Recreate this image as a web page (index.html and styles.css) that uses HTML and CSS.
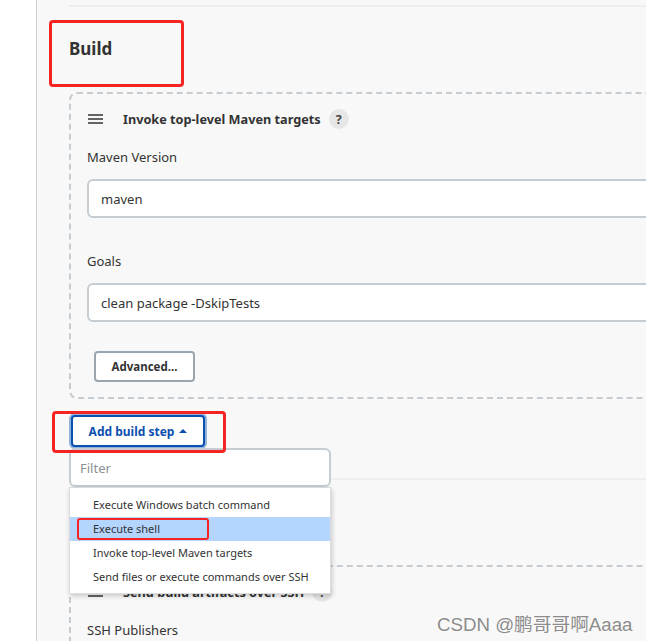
FILE: index.html
```html
<!DOCTYPE html>
<html>
<head>
  <meta charset="UTF-8">
  <title>Build</title>
  <link rel="stylesheet" href="styles.css">
</head>
<body>

  <div class="page">
    <div class="side"></div>

    <div class="main">
      <div class="section-sep"></div>
      <h2 class="section-title">Build</h2>

      <div class="step">
        <div class="step-head">
          <svg class="handle" width="15" height="10" viewBox="0 0 15 10">
            <path d="M0 1h15M0 5h15M0 9h15" stroke="#333" stroke-width="1.5" />
          </svg>
          <b class="step-name">Invoke top-level Maven targets</b>
          <span class="help">?</span>
        </div>

        <div class="field">
          <label for="mavenVersion">Maven Version</label>
          <input id="mavenVersion" type="text" value="maven" />
        </div>

        <div class="field">
          <label for="goals">Goals</label>
          <input id="goals" type="text" value="clean package -DskipTests" />
        </div>

        <button type="button" class="advanced-btn">Advanced...</button>
      </div>

      <div class="add-step">
        <button type="button" class="add-btn">Add build step <span class="caret"></span></button>

        <div class="popup">
          <input class="filter" type="text" placeholder="Filter" />
          <ul class="menu">
            <li>Execute Windows batch command</li>
            <li class="active">Execute shell</li>
            <li>Invoke top-level Maven targets</li>
            <li>Send files or execute commands over SSH</li>
          </ul>
        </div>
      </div>

      <div class="section-sep post-sep"></div>
      <!-- post-build header sits under the open menu -->
      <div class="section-title"></div>

      <div class="step">
        <div class="step-head">
          <svg class="handle" width="15" height="10" viewBox="0 0 15 10">
            <path d="M0 1h15M0 5h15M0 9h15" stroke="#333" stroke-width="1.5" />
          </svg>
          <b class="step-name">Send build artifacts over SSH</b>
          <span class="help">?</span>
        </div>
        <div class="field">
          <label>SSH Publishers</label>
        </div>
      </div>
    </div>
  </div>

  <!-- annotations drawn on top of the screenshot -->
  <div class="mark mark-build"></div>
  <div class="mark mark-add"></div>
  <div class="mark mark-shell"></div>

  <div class="watermark">CSDN @鹏哥哥啊Aaaa</div>

</body>
</html>
```

FILE: styles.css
```css
body {
  margin: 0;
  background-color: #fff;
  font-family: "Noto Sans", "Open Sans", Arial, sans-serif;
  color: #333;
  overflow: hidden;
  height: 641px;
}

.page {
  display: flex;
  min-height: 641px;
}

.side {
  width: 36px;
  flex: none;
  border-right: 1px solid #ccd1d5;
  background-color: #fff;
}

.main {
  flex: 1;
  background-color: #f8f8f8;
  padding: 5px 0 0 32px;
  min-width: 0;
}

.section-sep {
  height: 2px;
  background-color: #eeeeee;
}

.post-sep {
  margin-top: 31px;
  margin-left: 262px;
}

.section-title {
  margin: 32px 0 33px;
  height: 20px;
  font-size: 17px;
  line-height: 20px;
  font-weight: bold;
  color: #333;
}

.step {
  border: 2px dashed #c5ccd2;
  border-right: none;
  border-radius: 8px 0 0 8px;
  padding: 15px 0 15px 16px;
  margin-right: -40px;
}

.step-head {
  display: flex;
  align-items: center;
  height: 20px;
}

.handle {
  margin-left: 1px;
  margin-right: 20px;
}

.step-name {
  font-size: 12.7px;
  font-weight: bold;
  color: #333;
}

.help {
  width: 20px;
  height: 20px;
  border-radius: 50%;
  background-color: #e6e6e6;
  color: #444;
  font-size: 12.5px;
  font-weight: bold;
  display: flex;
  align-items: center;
  justify-content: center;
  margin-left: 8px;
}

.field label {
  display: block;
  font-size: 13px;
  line-height: 18px;
  margin: 19px 0 13px;
  color: #333;
}

.field + .field label {
  margin-top: 34px;
}

.field input {
  display: block;
  width: 100%;
  height: 39px;
  box-sizing: border-box;
  border: 2px solid #c5ccd2;
  border-radius: 6px;
  padding: 0 12px;
  font-family: inherit;
  font-size: 13px;
  color: #333;
  background-color: #fff;
}

.advanced-btn {
  margin: 29px 0 0 7px;
  width: 101px;
  height: 31px;
  border: 2px solid #9aa5ae;
  border-radius: 4px;
  background-color: #fff;
  font-family: inherit;
  font-size: 11.5px;
  font-weight: bold;
  color: #333;
}

.add-step {
  position: relative;
  margin-top: 16px;
  height: 32px;
}

.add-btn {
  margin-left: 2px;
  width: 134px;
  height: 32px;
  border: 2px solid #0b4fb0;
  border-radius: 4px;
  box-shadow: 0 0 0 2px #8fb3d9;
  background-color: #fff;
  font-family: inherit;
  font-size: 12px;
  font-weight: bold;
  color: #0b4fb0;
  display: flex;
  align-items: center;
  justify-content: center;
  gap: 5px;
}

.caret {
  width: 0;
  height: 0;
  border-left: 4px solid transparent;
  border-right: 4px solid transparent;
  border-bottom: 4px solid #0b4fb0;
}

.popup {
  position: absolute;
  left: 0;
  top: 33px;
  width: 262px;
  z-index: 5;
}

.filter {
  display: block;
  width: 100%;
  height: 39px;
  box-sizing: border-box;
  border: 2px solid #c5ccd2;
  border-radius: 6px;
  padding: 0 9px;
  font-family: inherit;
  font-size: 13px;
  background-color: #fff;
}

.filter::placeholder {
  color: #8a8f94;
}

.menu {
  list-style: none;
  margin: 0;
  padding: 5px 0 4px;
  background-color: #fff;
  border: 1px solid #dcdcdc;
  box-shadow: 1px 2px 5px rgba(0, 0, 0, 0.2);
}

.menu li {
  height: 24px;
  line-height: 24px;
  padding-left: 23px;
  font-size: 11px;
  color: #333;
}

.menu li.active {
  background-color: #b4d5fd;
}

.mark {
  position: absolute;
  border: 3px solid #f52424;
  border-radius: 4px;
  box-sizing: border-box;
  z-index: 10;
}

.mark-build {
  left: 49px;
  top: 20px;
  width: 135px;
  height: 67px;
}

.mark-add {
  left: 52px;
  top: 411px;
  width: 174px;
  height: 42px;
}

.mark-shell {
  left: 77px;
  top: 518px;
  width: 132px;
  height: 22px;
  border-width: 2px;
  border-radius: 3px;
}

.watermark {
  position: absolute;
  left: 437px;
  top: 609px;
  font-family: "Liberation Sans", "Noto Sans CJK SC", sans-serif;
  font-size: 18.7px;
  color: #8c8c8c;
  text-shadow: 0 0 2px #fff;
  z-index: 11;
}
```
